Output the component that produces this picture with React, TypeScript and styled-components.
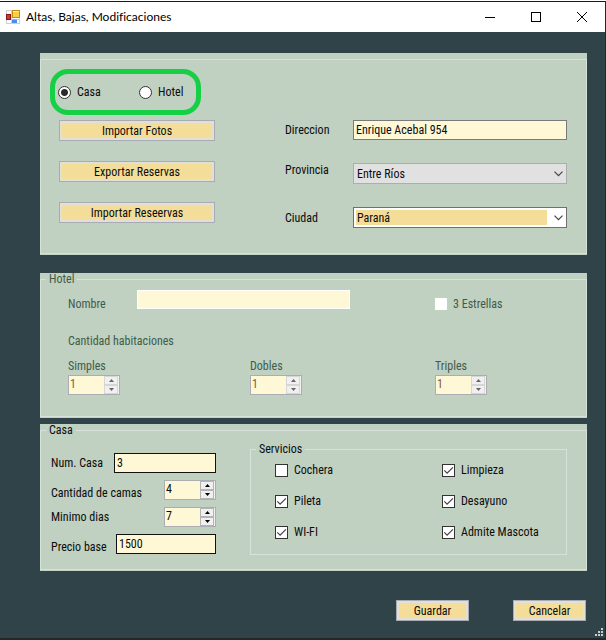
import React from "react";
import styled, { createGlobalStyle } from "styled-components";

const color = {
  window: "#2f4348",
  panel: "#c0d0c1",
  line: "#d9e2da",
  gold: "#f4dd98",
  cream: "#fff8d6",
  disabled: "#3f5c4a",
  ring: "#15cf45",
};

const GlobalStyle = createGlobalStyle`
  * { box-sizing: border-box; }
  body { margin: 0; background: #fff; }
  body, input, select, button {
    font-family: "Roboto Condensed", "Liberation Sans", Arial, sans-serif;
    font-size: 12px;
    line-height: 14px;
    color: #0c0c0c;
  }
`;

const Window = styled.div`
  position: relative;
  display: flex;
  flex-direction: column;
  min-height: calc(100vh - 1px);
  margin-top: 1px;
  border-top: 1px solid #1a1a1a;
  border-right: 1px solid #20292c;
  border-bottom: 2px solid #22282a;
  background: ${color.window};
`;

const TitleBar = styled.header`
  display: flex;
  align-items: center;
  height: 30px;
  padding-left: 6px;
  background: #fff;
`;

const Title = styled.h1`
  flex: 1;
  margin: 0 0 0 6px;
  font: 400 12px/16px Lato, "Open Sans", sans-serif;
  font-variant-ligatures: none;
  color: #000;
`;

const CaptionButton = styled.button`
  display: grid;
  place-items: center;
  width: 46px;
  height: 30px;
  padding: 0;
  border: 0;
  background: transparent;
`;

const Body = styled.main`
  padding: 21px 18px 17px 40px;
`;

const Panel = styled.section<{ $gap?: number; $untitled?: boolean }>`
  margin-bottom: ${(p) => p.$gap ?? 0}px;
  padding-top: ${(p) => (p.$untitled ? 6 : 0)}px;
  padding-bottom: 1px;
  background: ${color.panel};
`;

const Group = styled.fieldset<{ $height?: number }>`
  min-width: 0;
  min-height: ${(p) => p.$height ?? 0}px;
  margin: 0;
  padding: 0;
  border: 1px solid ${color.line};
  &:disabled { color: ${color.disabled}; }
`;

const Legend = styled.legend`
  margin-left: 5px;
  padding: 0 3px;
  line-height: 13px;
`;

const AddressLayout = styled.div`
  display: grid;
  grid-template-columns: 235px 1fr;
  padding: 9px 19px 0 9px;
`;

const RadioRing = styled.div`
  display: flex;
  align-items: center;
  width: 151px;
  height: 46px;
  padding-left: 3px;
  border: 5px solid ${color.ring};
  border-radius: 18px;
`;

const Choice = styled.label<{ $width?: number }>`
  display: flex;
  align-items: center;
  gap: 6px;
  width: ${(p) => (p.$width ? `${p.$width}px` : "auto")};
`;

const Radio = styled.input.attrs({ type: "radio" })`
  appearance: none;
  width: 13px;
  height: 13px;
  margin: 0;
  border: 1px solid #333;
  border-radius: 50%;
  background: #fff;
  &:checked { background: radial-gradient(circle, #2b2b2b 3px, #fff 4px); }
`;

const tick = `url("data:image/svg+xml,%3Csvg xmlns='http://www.w3.org/2000/svg' viewBox='0 0 11 11'%3E%3Cpath d='M1.3 5.4 4.1 8.2 9.9 2.4' fill='none' stroke='%23444' stroke-width='1.2'/%3E%3C/svg%3E")`;

const Check = styled.input.attrs({ type: "checkbox" })`
  appearance: none;
  width: 13px;
  height: 13px;
  margin: 0;
  border: 1px solid #333;
  background: #fff;
  &:checked { background: #fff ${tick} center / 11px 11px no-repeat; }
  &:disabled { width: 12px; height: 12px; border-color: #fff; }
`;

const GoldButton = styled.button<{ $width: number }>`
  width: ${(p) => p.$width}px;
  height: 21px;
  padding: 0;
  border: 1px solid #a9abb3;
  background: ${color.gold};
  box-shadow: inset 0 0 0 2px #e2dfd6;
`;

const ImportActions = styled.div`
  display: flex;
  flex-direction: column;
  gap: 20px;
  padding: 5px 0 0 9px;
`;

const AddressForm = styled.div`
  display: grid;
  grid-template-columns: 68px 1fr;
  grid-template-rows: 20px 21px 21px;
  row-gap: 23px;
  align-content: start;
  padding-top: 51px;
`;

const FieldLabel = styled.label<{ $align?: "start" | "center" | "end" }>`
  align-self: ${(p) => p.$align ?? "center"};
  white-space: nowrap;
`;

const TextBox = styled.input<{ $border?: string }>`
  min-width: 0;
  width: 100%;
  height: 20px;
  padding: 0 2px;
  border: 1px solid ${(p) => p.$border ?? "#7a7a7a"};
  border-radius: 0;
  background: ${color.cream};
`;

const Combo = styled.div<{ $muted?: boolean }>`
  display: flex;
  align-items: center;
  height: 21px;
  padding: 2px;
  border: 1px solid ${(p) => (p.$muted ? "#adadad" : "#707070")};
  background: ${(p) => (p.$muted ? "#e1e1e1" : "#fff")};
`;

const Select = styled.select<{ $muted?: boolean }>`
  appearance: none;
  flex: 1;
  min-width: 0;
  height: 15px;
  padding: 0 1px;
  border: 0;
  border-radius: 0;
  background: ${(p) => (p.$muted ? "transparent" : color.gold)};
`;

const ComboArrow = styled.span`
  display: grid;
  place-items: center end;
  width: 17px;
  padding-right: 1px;
`;

const Rooms = styled.div`
  display: grid;
  grid-template-columns: 182px 185px 1fr;
  padding: 4px 0 0 27px;
`;

const HotelName = styled.div`
  grid-column: span 2;
  display: flex;
  height: 28px;
  padding-right: 85px;
  & > label { width: 69px; }
  & > input { flex: 1; height: 19px; }
`;

const RoomsTitle = styled.div`
  grid-column: 1 / -1;
  padding: 16px 0 11px;
`;

const RoomField = styled.div`
  display: flex;
  flex-direction: column;
  gap: 2px;
`;

const SpinBox = styled.div`
  display: flex;
  width: 52px;
  height: 20px;
  padding-right: 1px;
  border: 1px solid #abadb3;
  background: #f2f2ee;
`;

const SpinInput = styled.input.attrs({ type: "number" })`
  appearance: textfield;
  flex: 1;
  min-width: 0;
  padding: 0 0 2px 1px;
  border: 0;
  background: ${color.cream};
  &:disabled { color: #80603f; }
  &::-webkit-inner-spin-button { appearance: none; }
`;

const SpinButtons = styled.div`
  display: grid;
  grid-template-rows: 1fr 1fr;
  width: 14px;
`;

const SpinButton = styled.button`
  display: grid;
  place-items: center;
  padding: 0;
  border: 1px solid #b4b4b4;
  background: #f0f0f0;
  color: #000;
  &:disabled { border-color: #d6d6d6; color: #666; }
`;

const HouseLayout = styled.div`
  display: grid;
  grid-template-columns: 165px 1fr;
  column-gap: 34px;
  padding: 6px 19px 0 10px;
`;

const HouseForm = styled.div`
  display: flex;
  flex-direction: column;
  gap: 7px;
  padding-top: 10px;
`;

const HouseRow = styled.div<{ $field: number }>`
  display: grid;
  grid-template-columns: 1fr ${(p) => p.$field}px;
`;

const Services = styled.div`
  display: grid;
  grid-template-columns: 167px 1fr;
  row-gap: 17px;
  padding: 7px 0 15px 24px;
`;

const Footer = styled.footer`
  display: flex;
  justify-content: flex-end;
  gap: 44px;
  padding: 29px 1px 0 0;
`;

const Grip = styled.svg`
  position: absolute;
  right: 2px;
  bottom: 2px;
`;

const FormIcon = () => (
  <svg width="14" height="14" viewBox="0 0 14 14" aria-hidden="true">
    <rect x="0.5" y="0.5" width="13" height="13" fill="#fff" stroke="#cfcfcf" />
    <path d="M5.5 1v12M1 9.5h12M1 4.5h4M10.5 9v4" stroke="#cfcfcf" />
    <rect x="0.5" y="4.5" width="4" height="5" fill="#c93a30" stroke="#8a1512" />
    <rect x="6.5" y="0.5" width="7" height="7" fill="#f8cf45" stroke="#c48a12" />
    <path d="M7 1.5h6" stroke="#fff0a8" />
    <rect x="6" y="9" width="5" height="4" fill="#4b8bea" />
    <path d="M6 9.5h5" stroke="#8cb8f6" />
  </svg>
);

const Chevron = () => (
  <svg width="9" height="6" viewBox="0 0 9 6" aria-hidden="true">
    <path d="M0.5 0.7 4.5 4.7 8.5 0.7" fill="none" stroke="#444" strokeWidth="1.2" />
  </svg>
);

const Triangle = ({ up }: { up?: boolean }) => (
  <svg width="5" height="3" viewBox="0 0 5 3" aria-hidden="true">
    <path d={up ? "M0 3 2.5 0 5 3Z" : "M0 0 2.5 3 5 0Z"} fill="currentColor" />
  </svg>
);

function Spinner({ id, value }: { id: string; value: number }) {
  const ref = React.useRef<HTMLInputElement>(null);
  return (
    <SpinBox>
      <SpinInput id={id} ref={ref} defaultValue={value} />
      <SpinButtons>
        <SpinButton type="button" aria-label="Aumentar" onClick={() => ref.current?.stepUp()}>
          <Triangle up />
        </SpinButton>
        <SpinButton type="button" aria-label="Disminuir" onClick={() => ref.current?.stepDown()}>
          <Triangle />
        </SpinButton>
      </SpinButtons>
    </SpinBox>
  );
}

const services = [
  { name: "Cochera", on: false },
  { name: "Limpieza", on: true },
  { name: "Pileta", on: true },
  { name: "Desayuno", on: true },
  { name: "WI-FI", on: true },
  { name: "Admite Mascota", on: true },
];

export default function App() {
  return (
    <>
      <GlobalStyle />
      <Window>
        <TitleBar>
          <FormIcon />
          <Title>Altas, Bajas, Modificaciones</Title>
          <CaptionButton aria-label="Minimizar">
            <svg width="10" height="10"><path d="M0 5.5h10" stroke="#000" /></svg>
          </CaptionButton>
          <CaptionButton aria-label="Maximizar">
            <svg width="10" height="10"><rect x="0.5" y="0.5" width="9" height="9" fill="none" stroke="#000" /></svg>
          </CaptionButton>
          <CaptionButton aria-label="Cerrar">
            <svg width="10" height="10"><path d="M0 0 10 10M10 0 0 10" stroke="#000" /></svg>
          </CaptionButton>
        </TitleBar>

        <Body>
          <Panel $untitled $gap={18}>
            <Group $height={195}>
              <AddressLayout>
                <div>
                  <RadioRing>
                    <Choice $width={81}>
                      <Radio name="tipo" defaultChecked />
                      Casa
                    </Choice>
                    <Choice>
                      <Radio name="tipo" />
                      Hotel
                    </Choice>
                  </RadioRing>
                  <ImportActions>
                    <GoldButton $width={156}>Importar Fotos</GoldButton>
                    <GoldButton $width={156}>Exportar Reservas</GoldButton>
                    <GoldButton $width={156}>Importar Reseervas</GoldButton>
                  </ImportActions>
                </div>
                <AddressForm>
                  <FieldLabel htmlFor="direccion">Direccion</FieldLabel>
                  <TextBox id="direccion" defaultValue="Enrique Acebal 954" />
                  <FieldLabel htmlFor="provincia" $align="start">Provincia</FieldLabel>
                  <Combo $muted>
                    <Select id="provincia" $muted defaultValue="Entre Ríos">
                      <option>Entre Ríos</option>
                    </Select>
                    <ComboArrow><Chevron /></ComboArrow>
                  </Combo>
                  <FieldLabel htmlFor="ciudad">Ciudad</FieldLabel>
                  <Combo>
                    <Select id="ciudad" defaultValue="Paraná">
                      <option>Paraná</option>
                    </Select>
                    <ComboArrow><Chevron /></ComboArrow>
                  </Combo>
                </AddressForm>
              </AddressLayout>
            </Group>
          </Panel>

          <Panel $gap={6}>
            <Group disabled $height={144}>
              <Legend>Hotel</Legend>
              <Rooms>
                <HotelName>
                  <FieldLabel htmlFor="nombre">Nombre</FieldLabel>
                  <TextBox id="nombre" $border="#fff" />
                </HotelName>
                <Choice>
                  <Check />
                  3 Estrellas
                </Choice>
                <RoomsTitle>Cantidad habitaciones</RoomsTitle>
                <RoomField>
                  <label htmlFor="simples">Simples</label>
                  <Spinner id="simples" value={1} />
                </RoomField>
                <RoomField>
                  <label htmlFor="dobles">Dobles</label>
                  <Spinner id="dobles" value={1} />
                </RoomField>
                <RoomField>
                  <label htmlFor="triples">Triples</label>
                  <Spinner id="triples" value={1} />
                </RoomField>
              </Rooms>
            </Group>
          </Panel>

          <Panel>
            <Group $height={146}>
              <Legend>Casa</Legend>
              <HouseLayout>
                <HouseForm>
                  <HouseRow $field={102}>
                    <FieldLabel htmlFor="num">Num. Casa</FieldLabel>
                    <TextBox id="num" $border="#111" defaultValue="3" />
                  </HouseRow>
                  <HouseRow $field={52}>
                    <FieldLabel htmlFor="camas" $align="end">Cantidad de camas</FieldLabel>
                    <Spinner id="camas" value={4} />
                  </HouseRow>
                  <HouseRow $field={52}>
                    <FieldLabel htmlFor="dias">Minimo dias</FieldLabel>
                    <Spinner id="dias" value={7} />
                  </HouseRow>
                  <HouseRow $field={100}>
                    <FieldLabel htmlFor="precio" $align="end">Precio base</FieldLabel>
                    <TextBox id="precio" $border="#111" defaultValue="1500" />
                  </HouseRow>
                </HouseForm>
                <Group>
                  <Legend>Servicios</Legend>
                  <Services>
                    {services.map((s) => (
                      <Choice key={s.name}>
                        <Check defaultChecked={s.on} />
                        {s.name}
                      </Choice>
                    ))}
                  </Services>
                </Group>
              </HouseLayout>
            </Group>
          </Panel>

          <Footer>
            <GoldButton $width={73}>Guardar</GoldButton>
            <GoldButton $width={73}>Cancelar</GoldButton>
          </Footer>
        </Body>

        <Grip width="8" height="8" viewBox="0 0 8 8" fill="#c8cfd0" aria-hidden="true">
          <path d="M6 0h2v2h-2zM3 3h2v2h-2zM6 3h2v2h-2zM0 6h2v2h-2zM3 6h2v2h-2zM6 6h2v2h-2z" />
        </Grip>
      </Window>
    </>
  );
}
